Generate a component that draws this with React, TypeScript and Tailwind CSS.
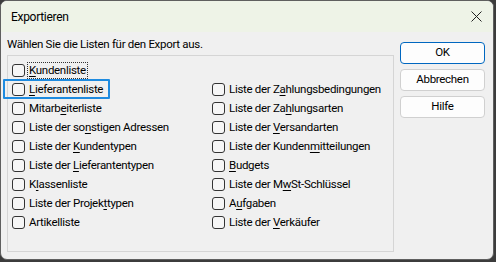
import React from "react";

type Item = { pre: string; key: string; post: string };

const leftItems: Item[] = [
  { pre: "", key: "K", post: "undenliste" },
  { pre: "", key: "L", post: "ieferantenliste" },
  { pre: "Mitarb", key: "e", post: "iterliste" },
  { pre: "Liste der so", key: "n", post: "stigen Adressen" },
  { pre: "Liste der ", key: "K", post: "undentypen" },
  { pre: "Liste der ", key: "L", post: "ieferantentypen" },
  { pre: "K", key: "l", post: "assenliste" },
  { pre: "Liste der Projek", key: "t", post: "typen" },
  { pre: "Artikelliste", key: "", post: "" },
];

const rightItems: Item[] = [
  { pre: "Liste der Z", key: "a", post: "hlungsbedingungen" },
  { pre: "Liste der Za", key: "h", post: "lungsarten" },
  { pre: "Liste der ", key: "V", post: "ersandarten" },
  { pre: "Liste der Kunden", key: "m", post: "itteilungen" },
  { pre: "", key: "B", post: "udgets" },
  { pre: "Liste der M", key: "w", post: "St-Schlüssel" },
  { pre: "A", key: "u", post: "fgaben" },
  { pre: "Liste der ", key: "V", post: "erkäufer" },
];

function CheckRow({ item, focused }: { item: Item; focused?: boolean }) {
  return (
    <div className="flex items-center h-[19px]">
      <div className="w-[13px] h-[13px] rounded-[3px] border border-[#333333] bg-[#f6f6f6] shrink-0" />
      <span
        className={
          "ml-[3px] px-[1px] leading-[15px] whitespace-nowrap " +
          (focused ? "outline outline-1 outline-dotted outline-[#333333]" : "")
        }
      >
        {item.pre}
        {item.key && <span className="underline underline-offset-2">{item.key}</span>}
        {item.post}
      </span>
    </div>
  );
}

function Button({ label, primary }: { label: string; primary?: boolean }) {
  return (
    <div
      className={
        "w-[85px] h-[22px] rounded-[4px] bg-[#fdfdfd] flex items-center justify-center text-black " +
        (primary ? "border-[1.5px] border-[#0067c0]" : "border border-[#d0d0d0]")
      }
    >
      {label}
    </div>
  );
}

export default function App() {
  return (
    <div className="w-[496px] h-[262px] bg-[#3c3c3c] overflow-hidden">
      <div
        className="relative w-[494px] h-[260px] rounded-[7px] border border-[#5f5f5f] bg-[#f0f0f0] overflow-hidden text-[11.5px] tracking-[-0.3px] text-black flex flex-col"
        style={{ fontFamily: 'Roboto, "Liberation Sans", sans-serif' }}
      >
        <div className="h-[31px] shrink-0 bg-[#eef3e7] flex items-center justify-between pl-[10px] pr-[10px]">
          <span className="text-[12px]">Exportieren</span>
          <svg width="11" height="11" viewBox="0 0 11 11" className="mr-[1px]">
            <path d="M0.5 0.5 L10.5 10.5 M10.5 0.5 L0.5 10.5" stroke="#222" strokeWidth="1" />
          </svg>
        </div>
        <div className="flex pl-[6px] pt-[4px]">
          <div className="flex flex-col">
            <div className="h-[17px] leading-[17px] mb-[2px]">Wählen Sie die Listen für den Export aus.</div>
            <div className="w-[387px] h-[197px] border border-[#d5d5d5] bg-[#f0f0f0] flex pl-[4px] pt-[5px]">
              <div className="w-[200px] shrink-0 flex flex-col">
                {leftItems.map((it, i) => (
                  <CheckRow key={i} item={it} focused={i === 0} />
                ))}
              </div>
              <div className="flex flex-col pt-[19px]">
                {rightItems.map((it, i) => (
                  <CheckRow key={i} item={it} />
                ))}
              </div>
            </div>
          </div>
          <div className="flex flex-col gap-[5px] ml-[6px] mt-[6px]">
            <Button label="OK" primary />
            <Button label="Abbrechen" />
            <Button label="Hilfe" />
          </div>
        </div>
        <div className="absolute left-[2px] top-[78px] w-[107px] h-[20px] border-2 border-[#1e8be0] rounded-[1px]" />
      </div>
    </div>
  );
}
